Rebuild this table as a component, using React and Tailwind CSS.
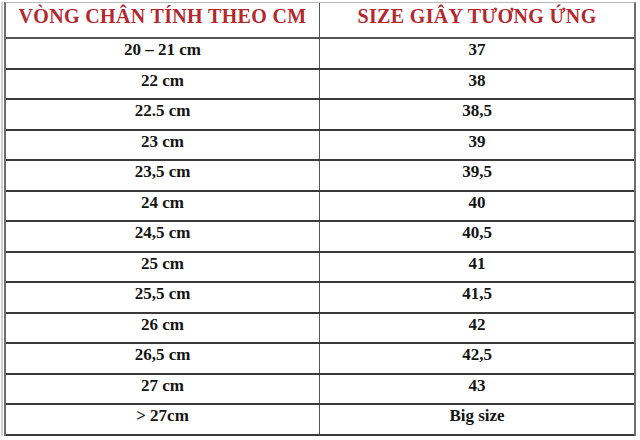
const rows = [
  ['20 – 21 cm', '37'],
  ['22 cm', '38'],
  ['22.5 cm', '38,5'],
  ['23 cm', '39'],
  ['23,5 cm', '39,5'],
  ['24 cm', '40'],
  ['24,5 cm', '40,5'],
  ['25 cm', '41'],
  ['25,5 cm', '41,5'],
  ['26 cm', '42'],
  ['26,5 cm', '42,5'],
  ['27 cm', '43'],
  ['> 27cm', 'Big size'],
];

const App = () => {
  return (
    <div className="w-[640px] h-[440px] bg-white overflow-hidden pl-[1px] pt-[2px] font-['Liberation_Serif'] font-bold">
      <div className="border-l-2 border-l-[#d0d0d0] pl-[1px] w-[636px]">
        <div className="w-[632px] border-l-2 border-r-2 border-l-[#6e6e6e] border-r-[#6e6e6e] border-t border-t-[#b8b8b8]">
          {/* header */}
          <div className="grid grid-cols-2 h-[36px] border-b-2 border-b-[#555]">
            <div className="border-r border-r-[#555] pt-[1px] text-center text-[20px] leading-[24px] tracking-[0.35px] text-[#b3272d]">
              VÒNG CHÂN TÍNH THEO CM
            </div>
            <div className="pt-[1px] text-center text-[20px] leading-[24px] tracking-[0.35px] text-[#b3272d]">
              SIZE GIÂY TƯƠNG ỨNG
            </div>
          </div>

          {rows.map(([foot, size], i) => (
            <div key={i} className="grid grid-cols-2 h-[30.5px] border-b-2 border-b-[#3a3a3a]">
              <div className="border-r border-r-[#555] pt-[1px] text-center text-[17px] leading-[20px] text-[#141414]">
                {foot}
              </div>
              <div className="pt-[1px] text-center text-[17px] leading-[20px] text-[#141414]">
                {size}
              </div>
            </div>
          ))}
        </div>
      </div>
    </div>
  );
};

export default App;
